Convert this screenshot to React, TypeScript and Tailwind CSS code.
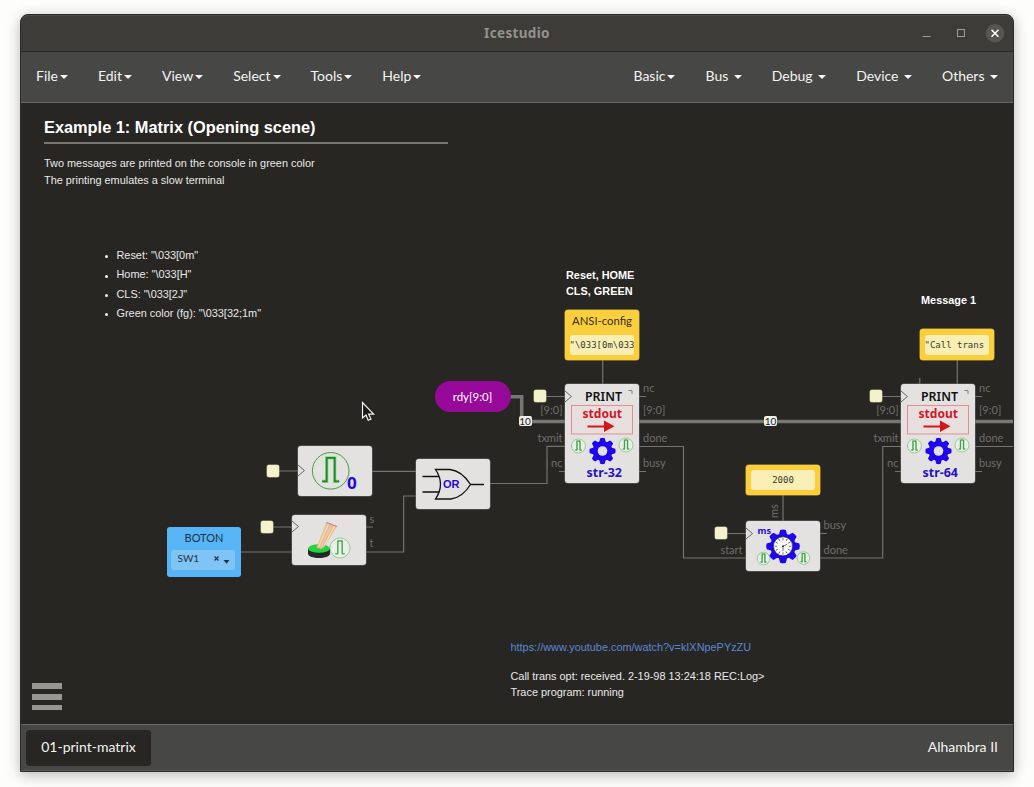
import React from "react";

type MenuEntry = { label: string; spaced?: boolean };

const leftMenu: MenuEntry[] = [
  { label: "File" },
  { label: "Edit" },
  { label: "View" },
  { label: "Select" },
  { label: "Tools" },
  { label: "Help" },
];

const rightMenu: MenuEntry[] = [
  { label: "Basic" },
  { label: "Bus", spaced: true },
  { label: "Debug", spaced: true },
  { label: "Device", spaced: true },
  { label: "Others", spaced: true },
];

function Menu({ items }: { items: MenuEntry[] }) {
  return (
    <ul className="flex">
      {items.map((m) => (
        <li
          key={m.label}
          className={
            "flex items-center px-[15px] text-[14px] leading-5 text-[#f4f4f2] " +
            (m.spaced ? "gap-[5.5px]" : "gap-[2px]")
          }
        >
          <span>{m.label}</span>
          <span className="mt-[2px] border-x-4 border-t-4 border-x-transparent border-t-[#fafafa]" />
        </li>
      ))}
    </ul>
  );
}

function TitleBar() {
  return (
    <header className="grid h-[37px] shrink-0 grid-cols-[1fr_auto_1fr] items-center rounded-t-[7px] border-t border-b border-t-[#4b4a47] border-b-[#272624] bg-[#3d3c38]">
      <span />
      <h1 className="font-['Noto_Sans',sans-serif] text-[13.5px] font-bold tracking-[0.35px] text-[#92928e]">
        Icestudio
      </h1>
      <div className="flex items-center justify-end">
        <svg className="h-[19px] w-[92px]" viewBox="0 0 92 19">
          <path d="M1.500 12.500h8" stroke="#9c9c98" />
          <rect x="36.500" y="5.500" width="7" height="7" fill="none" stroke="#9c9c98" />
          <circle cx="74" cy="9.300" r="9.200" fill="#575652" />
          <path d="M70.500 5.800l7 7m0-7l-7 7" stroke="#fff" strokeWidth="1.500" />
        </svg>
      </div>
    </header>
  );
}

function Pulse({ cx, cy, r, bold }: { cx: number; cy: number; r: number; bold?: boolean }) {
  const k = r / 18.3;
  const w = bold ? 2.2 : 1.1 / k;
  return (
    <g transform={`translate(${cx} ${cy}) scale(${k})`} fill="none">
      <circle r="18.3" stroke={bold ? "#3fa044" : "#79bd7b"} strokeWidth={bold ? 1 : 0.7 / k} fill={bold ? "none" : "#e9eee7"} />
      <path d="M-8.500 10.500h4.500v-23.500h8v23.500h4.500" stroke="#8fd492" strokeWidth={w * 1.5} />
      <path d="M-8.500 10.500h4.500v-23.500h8v23.500h4.500" stroke={bold ? "#178a20" : "#3b9a41"} strokeWidth={w * 0.8} />
    </g>
  );
}

function Gear({ cx, cy, r }: { cx: number; cy: number; r: number }) {
  const angles = [0, 45, 90, 135, 180, 225, 270, 315];
  return (
    <g transform={`translate(${cx} ${cy})`} fill="#1f05ee">
      <circle r={r * 0.76} />
      {angles.map((a) => (
        <path
          key={a}
          transform={`rotate(${a}) scale(${r})`}
          d="M-.26-.65L-.17-.98Q0-1.040 .17-.98L.26-.65z"
        />
      ))}
    </g>
  );
}

function Block({ className, children }: { className: string; children: React.ReactNode }) {
  return (
    <div className={"absolute overflow-hidden rounded-[3px] bg-[#e3e2e0] shadow-[0_0_0_0.5px_#6d6d69] " + className}>
      {children}
    </div>
  );
}

function PrintBlock({ className, name }: { className: string; name: string }) {
  return (
    <Block className={"h-[99px] w-[74px] " + className}>
      <svg className="h-[99px] w-[74px] font-['Noto_Sans',sans-serif]" viewBox="0 0 74 99">
        <path d="M0 7l6.500 5.500L0 18" fill="none" stroke="#666" />
        <text x="20" y="17" fontSize="12.500" fontWeight="600" textLength="37" lengthAdjust="spacingAndGlyphs" fill="#111">
          PRINT
        </text>
        <path d="M63.500 6.500h3.500v3.500" fill="none" stroke="#777" strokeWidth="0.900" />
        <rect x="6.500" y="21.500" width="61" height="28.500" fill="#e6dfdd" stroke="#e0858a" strokeWidth="0.900" />
        <text x="17.500" y="34" fontSize="12.500" fontWeight="700" textLength="39.500" lengthAdjust="spacingAndGlyphs" fill="#d3162a">
          stdout
        </text>
        <path d="M22.500 42.500h18" stroke="#d5151d" strokeWidth="2" />
        <path d="M39 36.500l10.500 5.800L39 48z" fill="#d5151d" />
        <Pulse cx={13.5} cy={62} r={7} />
        <Pulse cx={61} cy={61} r={7} />
        <Gear cx={37.5} cy={67} r={13} />
        <circle cx="37.500" cy="67" r="4.800" fill="#e3e2e0" />
        <text x="21.500" y="92.500" fontSize="12" fontWeight="700" textLength="35.500" lengthAdjust="spacingAndGlyphs" fill="#2a12c4">
          {name}
        </text>
      </svg>
    </Block>
  );
}

function ConstBlock({ className, label, value, center }: { className: string; label?: string; value: string; center?: boolean }) {
  return (
    <div
      className={
        "absolute flex w-[74px] flex-col items-center justify-end rounded-[3px] bg-[#fbcf3b] pb-[5px] shadow-[0_0_0_0.5px_#c9a93c] " + className
      }
    >
      {label && <span className="mb-[6px] text-[11.3px] leading-[16px] text-[#33301f]">{label}</span>}
      <span
        className={
          "block h-[20px] w-[64px] overflow-hidden rounded-[3px] bg-[#f9efb4] font-['DejaVu_Sans_Mono',monospace] text-[9px] leading-[21px] whitespace-nowrap text-[#3d3a2c] " +
          (center ? "text-center" : "text-left")
        }
      >
        <span className={center ? "" : "-ml-[0.5px]"}>{value}</span>
      </span>
    </div>
  );
}

const portLabels: { x: number; y: number; text: string; end?: boolean }[] = [
  { x: 643, y: 392, text: "nc" },
  { x: 643, y: 413.5, text: "[9:0]" },
  { x: 643, y: 442, text: "done" },
  { x: 643, y: 467, text: "busy" },
  { x: 562.5, y: 413.5, text: "[9:0]", end: true },
  { x: 562.5, y: 442, text: "txmit", end: true },
  { x: 562.5, y: 467, text: "nc", end: true },
  { x: 979, y: 392, text: "nc" },
  { x: 979, y: 413.5, text: "[9:0]" },
  { x: 979, y: 442, text: "done" },
  { x: 979, y: 467, text: "busy" },
  { x: 898.5, y: 413.5, text: "[9:0]", end: true },
  { x: 898.5, y: 442, text: "txmit", end: true },
  { x: 898.5, y: 467, text: "nc", end: true },
  { x: 823.5, y: 529, text: "busy" },
  { x: 823.5, y: 554, text: "done" },
  { x: 742.5, y: 554, text: "start", end: true },
  { x: 369.5, y: 523, text: "s" },
  { x: 369.5, y: 547, text: "t" },
];

function Wires() {
  return (
    <svg className="absolute inset-0 h-[621px] w-[992px]" viewBox="21 103 992 621">
      <g fill="none" stroke="#777773" strokeWidth="3.500">
        <path d="M510 396.700h11.700v24.800H565M639 421.500h262M975 421.500h38" />
      </g>
      <g fill="none" stroke="#73736f" strokeWidth="1.200">
        <path d="M490 483.500h57v-37.200h18" />
        <path d="M639 446.500h44.500V558H746" />
        <path d="M820 558h62.700V446.500H901" />
        <path d="M975 446.500h38" />
        <path d="M602.700 360v24M957.300 359v25M919.800 378v6M783 495v26" />
        <path d="M546 396.500h19M882 396.500h19M279 471h19M273 527h19M727 533.500h19" />
        <path d="M372 471.300h44M366 552h37.700v-56H416M241 552h51" />
        <path d="M639 396.500h7M639 471.500h7M559 471.500h6M975 396.500h7M975 471.500h7M895 471.500h6M366 527h7M820 533.500h7" />
      </g>
      <g fill="#6e6e6b" fontSize="11">
        {portLabels.map((p) => (
          <text key={`${p.x}-${p.y}`} x={p.x} y={p.y} textAnchor={p.end ? "end" : "start"}>
            {p.text}
          </text>
        ))}
        <text transform="translate(778 518) rotate(-90)">ms</text>
      </g>
    </svg>
  );
}

function BusWidth({ className }: { className: string }) {
  return (
    <span
      className={
        "absolute flex h-[10px] w-[13px] items-center justify-center rounded-[2px] bg-[#efefec] text-[10px] leading-none text-[#222] " +
        className
      }
    >
      10
    </span>
  );
}

function Clock({ className }: { className: string }) {
  return <span className={"absolute size-[12px] rounded-[2px] bg-[#f5f1ca] shadow-[0_0_0_0.5px_#a5a28a] " + className} />;
}

function ClockMark({ y }: { y: number }) {
  return <path d={`M0 ${y}l6.500 5.500L0 ${y + 11}`} fill="none" stroke="#666" />;
}

function Canvas() {
  return (
    <main className="relative h-[621px] shrink-0 overflow-hidden bg-[#272623] text-[#e9e9e7]">
      <section className="ml-[23px] w-[404px] pt-[15px] font-['Liberation_Sans',Arial,sans-serif]">
        <h2 className="h-[26px] border-b-2 border-[#767672] text-[16.350px] leading-[19px] font-bold text-white">
          Example 1: Matrix (Opening scene)
        </h2>
        <p className="mt-[11px] text-[10.900px] leading-[17px]">
          Two messages are printed on the console in green color
          <br />
          The printing emulates a slow terminal
        </p>
        <ul className="mt-[57px] pl-[72.500px] text-[10.900px] leading-[19.400px]">
          {['Reset: "\\033[0m"', 'Home: "\\033[H"', 'CLS: "\\033[2J"', 'Green color (fg): "\\033[32;1m"'].map((t) => (
            <li key={t} className="flex items-center">
              <span className="mr-[8.500px] -ml-[11.500px] size-[3px] translate-y-px rounded-full bg-[#f0f0ee]" />
              {t}
            </li>
          ))}
        </ul>
      </section>

      <Wires />

      <p className="absolute top-[164px] left-[545px] font-['Liberation_Sans',Arial,sans-serif] text-[10.900px] leading-[16px] font-bold text-white">
        Reset, HOME
        <br />
        CLS, GREEN
      </p>
      <p className="absolute top-[189px] left-[900px] font-['Liberation_Sans',Arial,sans-serif] text-[10.900px] leading-[16px] font-bold text-white">
        Message 1
      </p>

      <ConstBlock className="top-[207px] left-[544px] h-[50px]" label="ANSI-config" value={'"\\033[0m\\033'} />
      <ConstBlock className="top-[226px] left-[899px] h-[31px]" value={'"Call trans'} />
      <ConstBlock className="top-[362px] left-[725px] h-[30px]" value="2000" center />

      <div className="absolute top-[278px] left-[413.500px] flex h-[31px] w-[76px] items-center justify-center rounded-full bg-[#970a99] text-[11.500px] text-white">
        rdy[9:0]
      </div>

      <BusWidth className="top-[313px] left-[497.500px]" />
      <BusWidth className="top-[313px] left-[743px]" />

      <Clock className="top-[287.400px] left-[513.400px]" />
      <Clock className="top-[287.400px] left-[849.400px]" />
      <Clock className="top-[362px] left-[246px]" />
      <Clock className="top-[418px] left-[240px]" />
      <Clock className="top-[424.400px] left-[694px]" />

      <PrintBlock className="top-[281px] left-[544px]" name="str-32" />
      <PrintBlock className="top-[281px] left-[880px]" name="str-64" />

      <Block className="top-[343px] left-[277px] h-[50px] w-[74px]">
        <svg className="h-[50px] w-[74px]" viewBox="0 0 74 50">
          <ClockMark y={19} />
          <Pulse cx={32.7} cy={24.8} r={18.3} bold />
          <text x="49" y="42.800" fontSize="16.500" fontWeight="700" textLength="9.800" lengthAdjust="spacingAndGlyphs" fill="#2408d8" fontFamily="Noto Sans">
            0
          </text>
        </svg>
      </Block>

      <Block className="top-[412px] left-[271px] h-[50px] w-[74px]">
        <svg className="h-[50px] w-[74px]" viewBox="0 0 74 50">
          <ClockMark y={6} />
          <path d="M16 33.500v5c0 6 22 6 22 0v-5z" fill="#23282a" />
          <ellipse cx="27" cy="33.500" rx="11" ry="4.300" fill="#27d23c" />
          <path d="M24.500 32.500L34.500 7.500l10.500 4L31.500 33q-3 1.500-7-.5z" fill="#e6bc9c" />
          <path d="M26.500 32l10-23M32 31l10.500-20" stroke="#f6e49a" strokeWidth="1.200" />
          <path d="M29 32l10.500-22" stroke="#eec9d0" strokeWidth="1" />
          <path d="M34.500 7.500l10.500 4" stroke="#cf7f70" strokeWidth="1.200" />
          <Pulse cx={48} cy={33} r={10} />
        </svg>
      </Block>

      <Block className="top-[356px] left-[395px] h-[50px] w-[74px]">
        <svg className="h-[50px] w-[74px]" viewBox="0 0 74 50">
          <g fill="none" stroke="#111" strokeWidth="1.300">
            <path d="M19.500 10.500H34Q46 12 54.500 25.500 47 38 35 40H19.500q10-15 0-29.500z" />
            <path d="M6.500 17.500h16.500M6.500 33H23M54.500 25.500H68" />
          </g>
          <text x="27" y="29" fontSize="11" fontWeight="700" fill="#2408d8" fontFamily="Liberation Sans">
            OR
          </text>
        </svg>
      </Block>

      <Block className="top-[418px] left-[725px] h-[50px] w-[74px]">
        <svg className="h-[50px] w-[74px]" viewBox="0 0 74 50">
          <ClockMark y={7} />
          <Pulse cx={17.5} cy={37.5} r={6.3} />
          <Pulse cx={57.5} cy={37} r={6.3} />
          <Gear cx={37} cy={25.3} r={16.7} />
          <circle cx="37" cy="25.300" r="9.600" fill="#fafafa" stroke="#333" strokeWidth="0.800" />
          <g stroke="#444" strokeWidth="0.700">
            {[0, 30, 60, 90, 120, 150, 180, 210, 240, 270, 300, 330].map((a) => (
              <path key={a} d="M0-8.500v2.500" transform={`translate(37 25.300) rotate(${a})`} />
            ))}
            <path d="M37 25.300l4-2M37 25.300v5" />
          </g>
          <circle cx="37" cy="25.300" r="1" fill="#333" />
          <text x="11.500" y="12.500" fontSize="9.500" fontWeight="700" textLength="13.500" lengthAdjust="spacingAndGlyphs" fill="#2408d8" fontFamily="Noto Sans">
            ms
          </text>
        </svg>
      </Block>

      <div className="absolute top-[424px] left-[146px] flex h-[50px] w-[74px] flex-col items-center rounded-[3px] bg-[#57b4f5] pt-[3px] text-[#1d3346]">
        <span className="text-[11px] leading-[16px]">BOTON</span>
        <span className="mt-[4px] mr-[2px] flex h-[20px] w-[64px] items-center rounded-[3px] bg-[#80c4f5] pl-[6.500px] text-[10px]">
          <span className="pb-[3px]">SW1</span>
          <svg className="ml-[14px] h-[10px] w-[18px]" viewBox="0 0 18 10">
            <path d="M1.500 1.500l4 4m0-4l-4 4" stroke="#1d3346" strokeWidth="1.200" />
            <path d="M10.500 5h6l-3 3.800z" fill="#1d3346" />
          </svg>
        </span>
      </div>

      <div className="absolute top-[536px] left-[489.500px] font-['Liberation_Sans',Arial,sans-serif] text-[10.900px] leading-[16px]">
        <a className="block text-[#5b86d6]">https://www.youtube.com/watch?v=kIXNpePYzZU</a>
        <p className="mt-[13px]">
          Call trans opt: received. 2-19-98 13:24:18 REC:Log&gt;
          <br />
          Trace program: running
        </p>
      </div>

      <div className="absolute top-[580px] left-[11px] flex w-[30px] flex-col gap-[5px]">
        <span className="h-[6px] bg-[#979792]" />
        <span className="h-[6px] bg-[#979792]" />
        <span className="h-[5px] bg-[#979792]" />
      </div>

      <svg className="absolute top-[298px] left-[340px] h-[22px] w-[15px]" viewBox="0 0 15 22">
        <path d="M1.500 1.500v15.500l3.500-3 2.200 5.300 2.700-1.200-2.300-5h5z" fill="#1a1a18" stroke="#f2f2f0" strokeWidth="1.200" />
      </svg>
    </main>
  );
}

export default function App() {
  return (
    <div className="h-[787px] w-[1034px] overflow-hidden bg-[#fdfdfb] pt-[14px] pl-[20px] font-['Lato',sans-serif]">
      <div className="flex h-[758px] w-[994px] flex-col overflow-hidden rounded-t-[8px] border border-[#2b2a28] bg-[#474745] shadow-[0_3px_14px_rgba(0,0,0,0.28)]">
        <TitleBar />
        <nav className="flex h-[51px] shrink-0 items-center justify-between border-b border-[#686865] pb-[2px]">
          <Menu items={leftMenu} />
          <Menu items={rightMenu} />
        </nav>
        <Canvas />
        <footer className="flex flex-1 items-center justify-between border-t border-b border-t-[#686865] border-b-[#5a5a57] pr-[15px] pl-[5px] text-[14px] text-[#f4f4f2]">
          <span className="flex h-[36px] w-[125px] items-center justify-center rounded-[4px] bg-[#272623] pb-[2px]">01-print-matrix</span>
          <span className="pb-[2px]">Alhambra II</span>
        </footer>
      </div>
    </div>
  );
}
